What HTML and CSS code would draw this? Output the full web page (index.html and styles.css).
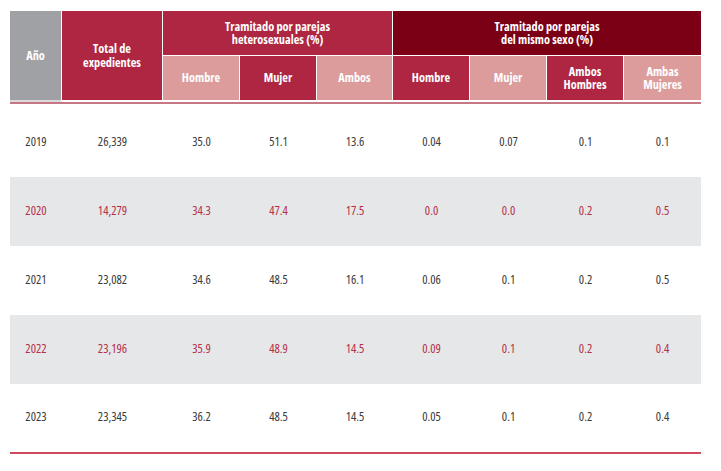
FILE: index.html
```html
<!DOCTYPE html>
<html lang="es">
<head>
<meta charset="utf-8">
<title>Expedientes</title>
<link rel="stylesheet" href="styles.css">
</head>
<body>
<table class="data">
  <colgroup>
    <col class="c-year"><col class="c-total"><col class="c-std"><col class="c-std"><col class="c-ambos"><col class="c-std"><col class="c-std"><col class="c-std"><col class="c-std">
  </colgroup>
  <thead>
    <tr class="group-row">
      <th rowspan="2" class="h-gray h-year">Año</th>
      <th rowspan="2" class="h-crimson h-total"><span class="ln">Total de</span><span class="ln">expedientes</span></th>
      <th colspan="3" class="h-crimson"><span class="ln">Tramitado por parejas</span><span class="ln">heterosexuales (%)</span></th>
      <th colspan="4" class="h-maroon last"><span class="ln">Tramitado por parejas</span><span class="ln">del mismo sexo (%)</span></th>
    </tr>
    <tr class="sub-row">
      <th class="h-pink">Hombre</th>
      <th class="h-crimson">Mujer</th>
      <th class="h-pink">Ambos</th>
      <th class="h-crimson">Hombre</th>
      <th class="h-pink">Mujer</th>
      <th class="h-crimson"><span class="ln">Ambos</span><span class="ln">Hombres</span></th>
      <th class="h-pink last"><span class="ln">Ambas</span><span class="ln">Mujeres</span></th>
    </tr>
  </thead>
  <tbody>
    <tr class="first">
      <td>2019</td><td>26,339</td><td>35.0</td><td>51.1</td><td>13.6</td><td>0.04</td><td>0.07</td><td>0.1</td><td>0.1</td>
    </tr>
    <tr class="alt">
      <td>2020</td><td>14,279</td><td>34.3</td><td>47.4</td><td>17.5</td><td>0.0</td><td>0.0</td><td>0.2</td><td>0.5</td>
    </tr>
    <tr>
      <td>2021</td><td>23,082</td><td>34.6</td><td>48.5</td><td>16.1</td><td>0.06</td><td>0.1</td><td>0.2</td><td>0.5</td>
    </tr>
    <tr class="alt">
      <td>2022</td><td>23,196</td><td>35.9</td><td>48.9</td><td>14.5</td><td>0.09</td><td>0.1</td><td>0.2</td><td>0.4</td>
    </tr>
    <tr class="last-row">
      <td>2023</td><td>23,345</td><td>36.2</td><td>48.5</td><td>14.5</td><td>0.05</td><td>0.1</td><td>0.2</td><td>0.4</td>
    </tr>
  </tbody>
</table>
</body>
</html>
```

FILE: styles.css
```css
html, body {
  margin: 0;
  padding: 0;
  background: #ffffff;
}

body {
  padding: 11px 20px 0 10px;
  font-family: "Liberation Sans Narrow", "Open Sans", "Liberation Sans", sans-serif;
  font-stretch: condensed;
}

.data {
  width: 691px;
  table-layout: fixed;
  border-collapse: separate;
  border-spacing: 0;
}

.c-year { width: 52px; }
.c-total { width: 101px; }
.c-std { width: 77px; }
.c-ambos { width: 76px; }

.data th {
  padding: 0;
  color: #ffffff;
  font-weight: bold;
  font-size: 12.3px;
  line-height: 13.5px;
  text-align: center;
  vertical-align: middle;
  border-right: 1px solid #ffffff;
  border-bottom: 1px solid #ffffff;
}

.ln {
  display: block;
}

.data th.last {
  border-right: 0;
}

.group-row th {
  height: 44px;
}

.group-row th.h-year,
.group-row th.h-total {
  border-bottom-width: 2px;
}

.sub-row th {
  height: 44px;
  border-bottom-width: 2px;
}

.h-gray { background: #a0a1a4; }
.data th.h-year { border-bottom-color: #dadadc; }
.h-crimson { background: #ae2641; }
.h-maroon { background: #7b0016; }
.h-pink { background: #dc9c9c; }

.data td {
  padding: 0 0 2px 0;
  height: 67px;
  text-align: center;
  vertical-align: middle;
  font-size: 12.5px;
  line-height: 14px;
  color: #3a3a3c;
}

.data tr.first td {
  border-top: 2px solid #c57884;
  padding-top: 4px;
}

.data tr.alt td {
  background: #e6e7e8;
  color: #b5304a;
}

.data tr.last-row td {
  border-bottom: 2px solid #d04a5f;
  height: 66px;
}
```
